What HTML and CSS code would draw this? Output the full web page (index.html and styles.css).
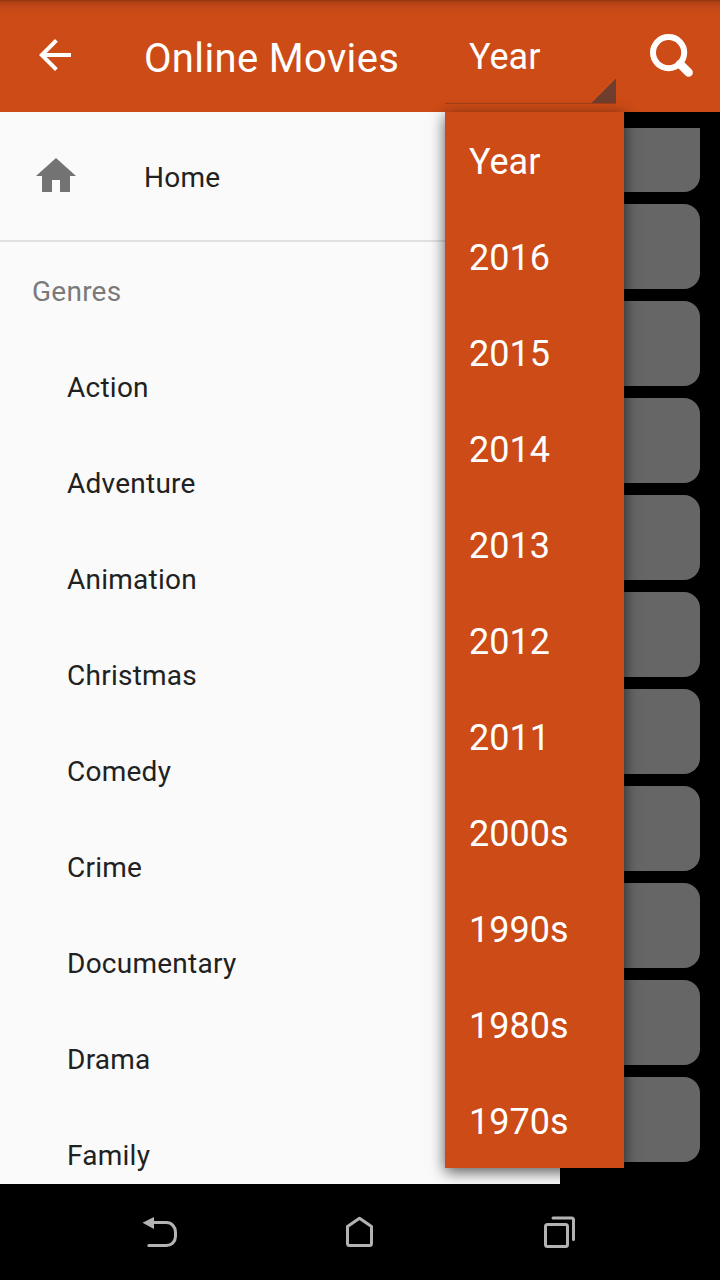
FILE: index.html
```html
<!DOCTYPE html>
<html>
<head>
    <meta charset='utf-8'>
    <title>Online Movies</title>
    <link rel="stylesheet" href="styles.css">
</head>
<body>
    <div class='topbar'>
        <svg class='back' viewBox="0 0 32 32"><path d="M32 16H4M17.4 1.4L2.8 16L17.4 30.6" /></svg>
        <div class='title'>Online Movies</div>
        <div class='spinner'>
            <div class='selected'>Year</div>
            <div class='menu'>
                <div class='option'>Year</div>
                <div class='option'>2016</div>
                <div class='option'>2015</div>
                <div class='option'>2014</div>
                <div class='option'>2013</div>
                <div class='option'>2012</div>
                <div class='option'>2011</div>
                <div class='option'>2000s</div>
                <div class='option'>1990s</div>
                <div class='option'>1980s</div>
                <div class='option'>1970s</div>
            </div>
        </div>
        <svg class='search' viewBox="0 0 44 44"><circle cx="18.6" cy="18.6" r="15.6" /><path d="M30 30L38.6 38.6" /></svg>
    </div>

    <div class='content'>
        <div class='drawer'>
            <div class='home'>
                <svg viewBox="0 0 40 34"><path d="M0 18L20 0L40 18H34V34H24V22H16V34H6V18Z" /></svg>
                <span>Home</span>
            </div>
            <div class='heading'>Genres</div>
            <div class='genre'>Action</div>
            <div class='genre'>Adventure</div>
            <div class='genre'>Animation</div>
            <div class='genre'>Christmas</div>
            <div class='genre'>Comedy</div>
            <div class='genre'>Crime</div>
            <div class='genre'>Documentary</div>
            <div class='genre'>Drama</div>
            <div class='genre'>Family</div>
        </div>
        <div class='list'>
            <div class='card first'></div>
            <div class='card'></div>
            <div class='card'></div>
            <div class='card'></div>
            <div class='card'></div>
            <div class='card'></div>
            <div class='card'></div>
            <div class='card'></div>
            <div class='card'></div>
            <div class='card'></div>
            <div class='card'></div>
        </div>
    </div>

    <div class='navbar'>
        <svg viewBox="0 0 40 40"><path d="M8 12.6H26.5C31.5 12.6 35.5 16.8 35.5 22V26.5C35.5 31.5 31.5 35.5 26.5 35.5H8.8" /><path class='arrow' d="M2.5 12.8L14 7V19Z" /></svg>
        <svg viewBox="0 0 40 40"><path d="M19.5 8.3L31.5 16.5V33.5Q31.5 35.5 29.5 35.5H9.5Q7.5 35.5 7.5 33.5V16.5Z" /></svg>
        <svg viewBox="0 0 40 40"><rect x="5.5" y="14.5" width="22" height="22" rx="2" /><path d="M13 8H31.5Q33.5 8 33.5 10V29.5" /></svg>
    </div>
</body>
</html>
```

FILE: styles.css
```css
body {
    margin: 0;
    width: 720px;
    height: 1280px;
    display: flex;
    flex-direction: column;
    overflow: hidden;
    background-color: #000;
    font-family: Roboto, sans-serif;
}
.topbar {
    height: 112px;
    display: flex;
    align-items: flex-start;
    box-sizing: border-box;
    padding-left: 39px;
    background: linear-gradient(#8f3410 0, #b04014 2px, #c54817 8px, #cc4b16 16px);
    color: #fff;
}
.back {
    width: 32px;
    height: 32px;
    margin-top: 39px;
    fill: none;
    stroke: #fff;
    stroke-width: 4;
}
.title {
    width: 300px;
    margin-left: 73px;
    font-size: 40px;
    line-height: 118px;
    letter-spacing: 0.35px;
}
.spinner {
    position: relative;
    width: 171px;
    margin-left: 1px;
}
.selected {
    height: 104px;
    box-sizing: border-box;
    padding-left: 24px;
    border-bottom: 1px solid #a53d14;
    background: linear-gradient(135deg, transparent 50%, #703e2f 50%) right bottom / 24px 24px no-repeat;
    font-size: 36px;
    line-height: 115px;
}
.menu {
    position: absolute;
    z-index: 1;
    top: 112px;
    left: 0;
    width: 179px;
    background-color: #cc4b16;
    box-shadow: 0 4px 14px rgba(0, 0, 0, 0.65);
}
.option {
    height: 96px;
    padding-left: 24px;
    font-size: 36px;
    line-height: 101px;
}
.search {
    width: 44px;
    height: 44px;
    margin-top: 34px;
    margin-left: 34px;
    fill: none;
    stroke: #fff;
    stroke-width: 6;
}
.search path {
    stroke-width: 8.5;
    stroke-linecap: round;
}
.content {
    height: 1072px;
    display: flex;
    overflow: hidden;
}
.drawer {
    width: 560px;
    background-color: #fafafa;
    color: #212121;
    font-size: 28px;
    letter-spacing: 0.25px;
}
.home {
    height: 128px;
    display: flex;
    align-items: center;
    padding-left: 36px;
    border-bottom: 2px solid #e0e0e0;
}
.home svg {
    width: 40px;
    height: 34px;
    margin-right: 68px;
    margin-top: -2px;
    fill: #737373;
}
.home span {
    line-height: 34px;
    padding-top: 4px;
}
.heading {
    height: 98px;
    padding-left: 32px;
    line-height: 99px;
    color: #7a7a7a;
}
.genre {
    height: 96px;
    padding-left: 67px;
    line-height: 96px;
}
.list {
    width: 140px;
    display: flex;
    flex-direction: column;
    gap: 12px;
    padding-top: 16px;
}
.card {
    height: 85px;
    border-radius: 0 16px 16px 0;
    background-color: #666;
}
.first {
    height: 64px;
    border-radius: 0 0 16px 0;
}
.navbar {
    height: 96px;
    display: flex;
    align-items: center;
    justify-content: space-between;
    padding: 0 140px;
}
.navbar svg {
    width: 40px;
    height: 40px;
    margin-top: -4px;
    fill: none;
    stroke: #b3b3b3;
    stroke-width: 3;
    stroke-linecap: round;
    stroke-linejoin: round;
}
.navbar .arrow {
    fill: #b3b3b3;
    stroke: none;
}
```
